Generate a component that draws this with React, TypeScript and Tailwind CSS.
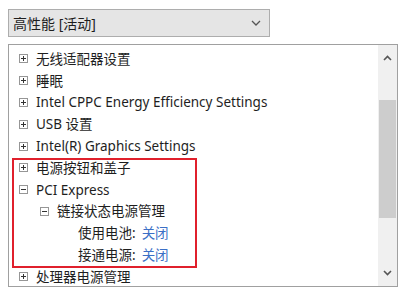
import React from "react";

const font = { fontFamily: '"Segoe UI", "Noto Sans", "Noto Sans CJK SC", sans-serif' };

function Box({ open }: { open?: boolean }) {
  return (
    <svg width="9" height="9" viewBox="0 0 9 9" className="shrink-0">
      <rect x="0.5" y="0.5" width="8" height="8" fill="#fff" stroke="#969696" />
      <line x1="2" y1="4.5" x2="7" y2="4.5" stroke="#333" />
      {!open && <line x1="4.5" y1="2" x2="4.5" y2="7" stroke="#333" />}
    </svg>
  );
}

function Row({ indent, open, label, value, leaf }: { indent: number; open?: boolean; label: string; value?: string; leaf?: boolean }) {
  return (
    <div className="flex h-[21.8px] items-center whitespace-nowrap" style={{ paddingLeft: indent }}>
      {!leaf && <Box open={open} />}
      <span className={leaf ? "" : "ml-[8px]"}>{label}</span>
      {value && <span className="ml-[6px] text-[#3b6fc6]">{value}</span>}
    </div>
  );
}

export default function App() {
  return (
    <div className="relative w-[400px] h-[287px] overflow-hidden bg-white text-[13.5px] text-[#1e1e1e]" style={font}>
      <div className="pt-[9px] pl-[8px]">
        <div className="flex h-[28px] w-[262px] items-center justify-between border border-[#adadad] bg-[#e5e5e5] pl-[4px] pr-[8px] text-[14px]">
          <span>高性能 [活动]</span>
          <svg width="10" height="6" viewBox="0 0 10 6">
            <path d="M1 1 L5 5 L9 1" fill="none" stroke="#555" strokeWidth="1.3" />
          </svg>
        </div>
      </div>
      <div className="ml-[8px] mt-[7px] flex h-[243px] w-[390px] border border-[#a0a0a0] bg-white">
        <div className="flex-1 overflow-hidden pt-[3px] pl-[10px]">
          <Row indent={0} label="无线适配器设置" />
          <Row indent={0} label="睡眠" />
          <Row indent={0} label="Intel CPPC Energy Efficiency Settings" />
          <Row indent={0} label="USB 设置" />
          <Row indent={0} label="Intel(R) Graphics Settings" />
          <Row indent={0} label="电源按钮和盖子" />
          <Row indent={0} open label="PCI Express" />
          <Row indent={21} open label="链接状态电源管理" />
          <Row indent={59} leaf label="使用电池:" value="关闭" />
          <Row indent={59} leaf label="接通电源:" value="关闭" />
          <Row indent={0} label="处理器电源管理" />
        </div>
        <div className="flex w-[19px] flex-col items-center bg-[#f0f0f0]">
          <div className="flex h-[22px] w-full items-center justify-center pt-[3px]">
            <svg width="9" height="6" viewBox="0 0 9 6">
              <path d="M1 5 L4.5 1.5 L8 5" fill="none" stroke="#555" strokeWidth="1.6" />
            </svg>
          </div>
          <div className="mt-[33px] h-[118px] w-[17px] bg-[#cdcdcd]" />
          <div className="flex-1" />
          <div className="flex h-[22px] w-full items-center justify-center pb-[4px]">
            <svg width="9" height="6" viewBox="0 0 9 6">
              <path d="M1 1 L4.5 4.5 L8 1" fill="none" stroke="#555" strokeWidth="1.6" />
            </svg>
          </div>
        </div>
      </div>
      <div className="absolute left-[12px] top-[158px] h-[110px] w-[185px] border-2 border-[#e0202c]" />
    </div>
  );
}
